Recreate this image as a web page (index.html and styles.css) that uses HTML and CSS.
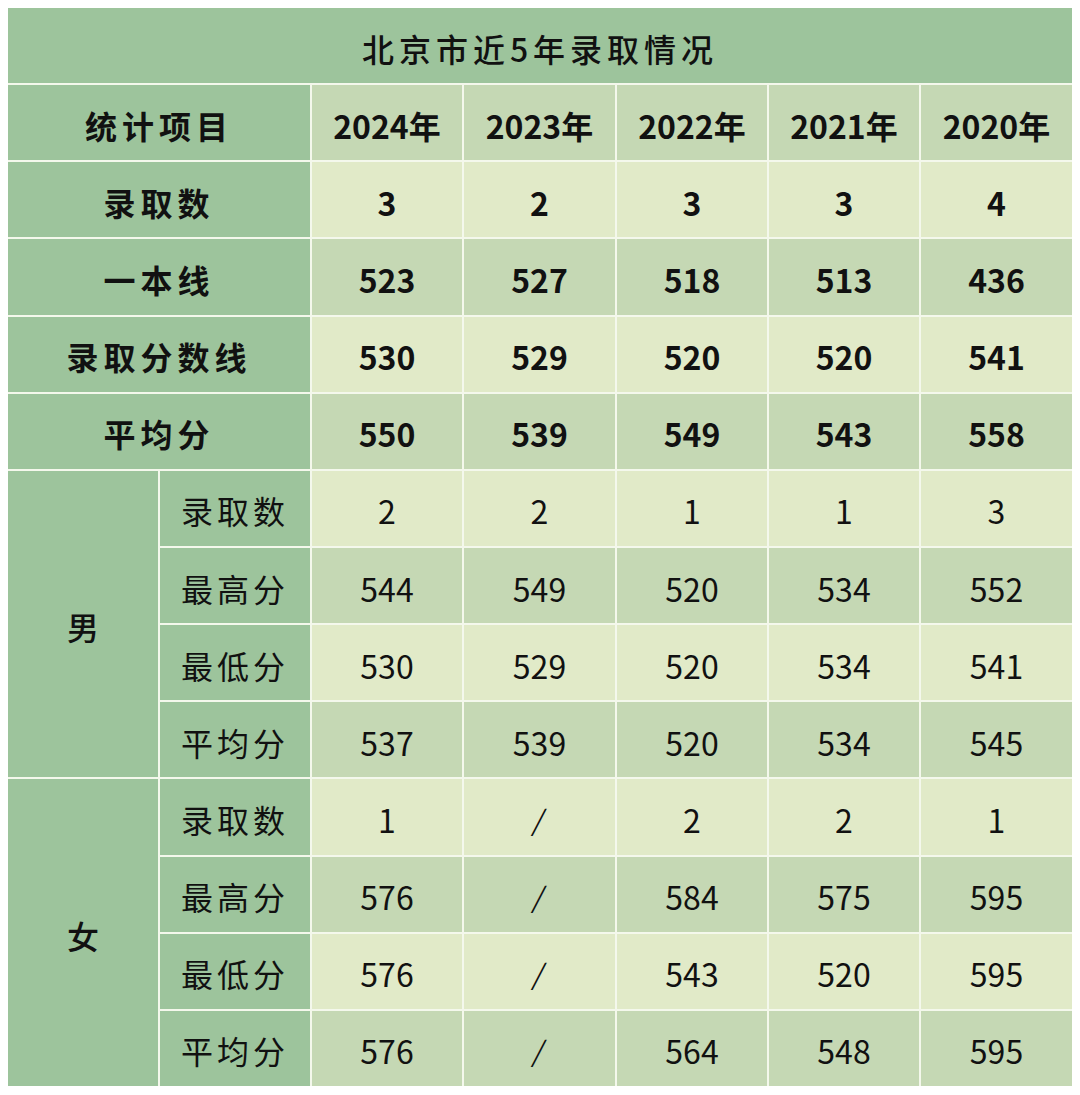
FILE: index.html
```html
<!DOCTYPE html>
<html lang="zh">
<head>
<meta charset="utf-8">
<title>北京市近5年录取情况</title>
<link rel="stylesheet" href="styles.css">
</head>
<body>
<div class="table">
  <div class="cell title">北京市近5年录取情况</div>

  <div class="cell label bold span2">统计项目</div>
  <div class="cell mid bold">2024年</div>
  <div class="cell mid bold">2023年</div>
  <div class="cell mid bold">2022年</div>
  <div class="cell mid bold">2021年</div>
  <div class="cell mid bold">2020年</div>

  <div class="cell label bold span2">录取数</div>
  <div class="cell light bold">3</div>
  <div class="cell light bold">2</div>
  <div class="cell light bold">3</div>
  <div class="cell light bold">3</div>
  <div class="cell light bold">4</div>

  <div class="cell label bold span2">一本线</div>
  <div class="cell mid bold">523</div>
  <div class="cell mid bold">527</div>
  <div class="cell mid bold">518</div>
  <div class="cell mid bold">513</div>
  <div class="cell mid bold">436</div>

  <div class="cell label bold span2">录取分数线</div>
  <div class="cell light bold">530</div>
  <div class="cell light bold">529</div>
  <div class="cell light bold">520</div>
  <div class="cell light bold">520</div>
  <div class="cell light bold">541</div>

  <div class="cell label bold span2">平均分</div>
  <div class="cell mid bold">550</div>
  <div class="cell mid bold">539</div>
  <div class="cell mid bold">549</div>
  <div class="cell mid bold">543</div>
  <div class="cell mid bold">558</div>

  <div class="cell label gender">男</div>
  <div class="cell label sub">录取数</div>
  <div class="cell light">2</div>
  <div class="cell light">2</div>
  <div class="cell light">1</div>
  <div class="cell light">1</div>
  <div class="cell light">3</div>

  <div class="cell label sub">最高分</div>
  <div class="cell mid">544</div>
  <div class="cell mid">549</div>
  <div class="cell mid">520</div>
  <div class="cell mid">534</div>
  <div class="cell mid">552</div>

  <div class="cell label sub">最低分</div>
  <div class="cell light">530</div>
  <div class="cell light">529</div>
  <div class="cell light">520</div>
  <div class="cell light">534</div>
  <div class="cell light">541</div>

  <div class="cell label sub">平均分</div>
  <div class="cell mid">537</div>
  <div class="cell mid">539</div>
  <div class="cell mid">520</div>
  <div class="cell mid">534</div>
  <div class="cell mid">545</div>

  <div class="cell label gender">女</div>
  <div class="cell label sub">录取数</div>
  <div class="cell light">1</div>
  <div class="cell light"><span class="slash">/</span></div>
  <div class="cell light">2</div>
  <div class="cell light">2</div>
  <div class="cell light">1</div>

  <div class="cell label sub">最高分</div>
  <div class="cell mid">576</div>
  <div class="cell mid"><span class="slash">/</span></div>
  <div class="cell mid">584</div>
  <div class="cell mid">575</div>
  <div class="cell mid">595</div>

  <div class="cell label sub">最低分</div>
  <div class="cell light">576</div>
  <div class="cell light"><span class="slash">/</span></div>
  <div class="cell light">543</div>
  <div class="cell light">520</div>
  <div class="cell light">595</div>

  <div class="cell label sub">平均分</div>
  <div class="cell mid">576</div>
  <div class="cell mid"><span class="slash">/</span></div>
  <div class="cell mid">564</div>
  <div class="cell mid">548</div>
  <div class="cell mid">595</div>
</div>
</body>
</html>
```

FILE: styles.css
```css
html, body {
  margin: 0;
  padding: 0;
  background: #ffffff;
}

body {
  padding: 8px;
  font-family: "Noto Sans CJK SC", "Noto Sans", sans-serif;
  color: #111111;
}

.table {
  display: grid;
  width: 1064px;
  height: 1078px;
  grid-template-columns: 150px 150px 150px 151px 150px 150px 151px;
  grid-template-rows: repeat(14, 1fr);
  gap: 2px;
  background: #f4f8ec;
}

.cell {
  display: flex;
  align-items: center;
  justify-content: center;
  font-size: 32px;
  line-height: 1;
  padding-top: 4px;
}

.title {
  grid-column: 1 / span 7;
  background: #9dc49c;
  font-weight: 500;
  letter-spacing: 5px;
}

.label {
  background: #9dc49c;
}

.span2 {
  grid-column: 1 / span 2;
}

.gender {
  grid-row: span 4;
  font-weight: 500;
}

.sub {
  letter-spacing: 4px;
  justify-content: flex-start;
  padding-left: 21px;
}

.bold {
  font-weight: 700;
}

.label.bold {
  letter-spacing: 5px;
}

.mid {
  background: #c5d8b4;
}

.light {
  background: #e1eac8;
}

.slash {
  font-size: 28px;
  transform: skewX(-12deg);
}
```
